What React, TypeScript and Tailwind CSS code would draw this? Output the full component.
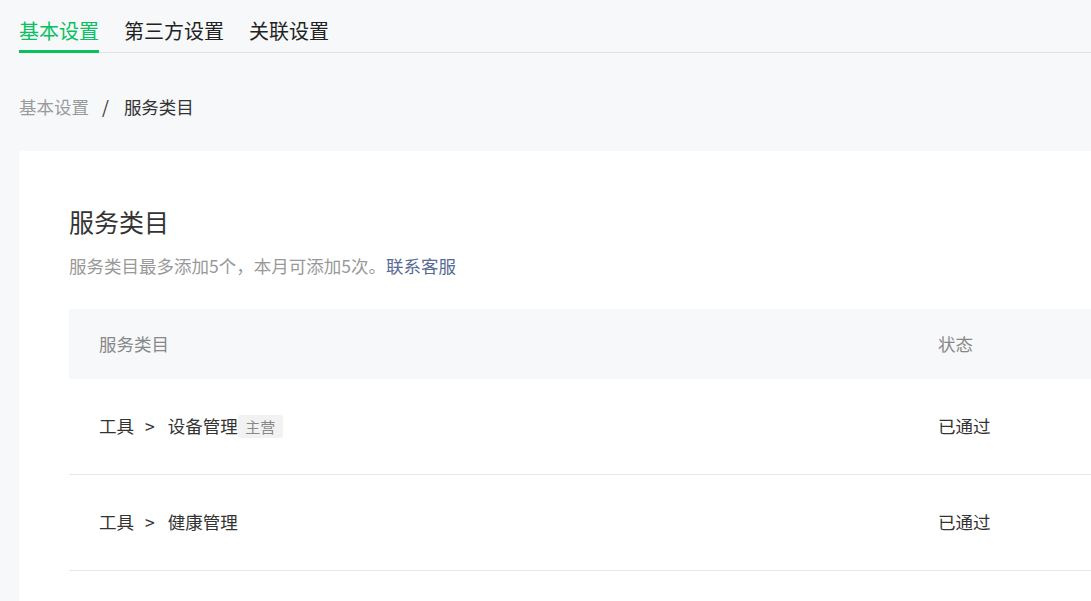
import React from "react";

const rows = [
  { path: ["工具", "设备管理"], main: true, status: "已通过" },
  { path: ["工具", "健康管理"], main: false, status: "已通过" },
];

export default function App() {
  return (
    <div
      className="min-h-[601px] w-full overflow-hidden bg-[#f7f8fa] text-[#333]"
      style={{ fontFamily: '"Noto Sans CJK SC", "Noto Sans", sans-serif' }}
    >
      <div className="pl-[19px]">
        {/* Tabs */}
        <div className="flex gap-[25px] border-b border-[#e2e2e2]">
          {["基本设置", "第三方设置", "关联设置"].map((t, i) => (
            <div
              key={t}
              className={
                "-mb-px pt-[17px] pb-[5px] border-b-[3px] text-[20px] leading-[28px] " +
                (i === 0
                  ? "border-[#07c160] text-[#07c160]"
                  : "border-transparent text-[#222]")
              }
            >
              {t}
            </div>
          ))}
        </div>

        {/* Breadcrumb */}
        <div className="mt-[42px] flex items-center text-[17.5px] leading-[24px]">
          <span className="text-[#9a9a9a]">基本设置</span>
          <span className="ml-[13px] mr-[15px] text-[#333]">/</span>
          <span className="text-[#333]">服务类目</span>
        </div>

        {/* Card */}
        <div className="mt-[32px] min-h-[460px] rounded-tl-[4px] bg-white pl-[50px] pt-[54px]">
          <div className="text-[25px] leading-[32px] text-[#333]">服务类目</div>
          <div className="mt-[16px] text-[17.5px] leading-[26px] text-[#999]">
            服务类目最多添加5个，本月可添加5次。
            <span className="text-[#576b95]">联系客服</span>
          </div>

          {/* Table */}
          <div className="mt-[30px]">
            <div className="flex h-[70px] items-center bg-[#f7f8fa] text-[17.5px] text-[#888]">
              <div className="w-[869px] shrink-0 pl-[30px]">服务类目</div>
              <div>状态</div>
            </div>
            {rows.map((r, idx) => (
              <div
                key={idx}
                className="flex h-[96px] items-center border-b border-[#e6e6e6] text-[17.5px] text-[#333]"
              >
                <div className="flex w-[869px] shrink-0 items-center pl-[30px]">
                  <span>{r.path[0]}</span>
                  <span className="ml-[11px] mr-[13px]">&gt;</span>
                  <span>{r.path[1]}</span>
                  {r.main && (
                    <span className="flex h-[23px] w-[45px] items-center justify-center rounded-[2px] bg-[#f2f2f2] text-[15px] leading-none text-[#888]">
                      主营
                    </span>
                  )}
                </div>
                <div>{r.status}</div>
              </div>
            ))}
          </div>
        </div>
      </div>
    </div>
  );
}
